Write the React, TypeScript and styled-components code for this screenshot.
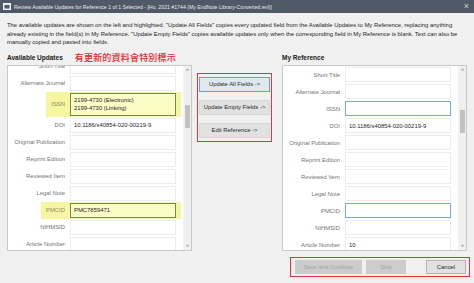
import styled, { createGlobalStyle } from "styled-components";

type Field = {
  label: string;
  value?: string[];
  height?: number;
  highlight?: boolean;
  focus?: boolean;
};

const updates: Field[] = [
  { label: "Short Title" },
  { label: "Alternate Journal" },
  { label: "ISSN", value: ["2199-4730 (Electronic)", "2199-4730 (Linking)"], height: 25, highlight: true },
  { label: "DOI", value: ["10.1186/s40854-020-00219-9"] },
  { label: "Original Publication" },
  { label: "Reprint Edition" },
  { label: "Reviewed Item" },
  { label: "Legal Note" },
  { label: "PMCID", value: ["PMC7859471"], highlight: true },
  { label: "NIHMSID" },
  { label: "Article Number" },
];

const reference: Field[] = [
  { label: "Short Title" },
  { label: "Alternate Journal" },
  { label: "ISSN", focus: true },
  { label: "DOI", value: ["10.1186/s40854-020-00219-9"] },
  { label: "Original Publication" },
  { label: "Reprint Edition" },
  { label: "Reviewed Item" },
  { label: "Legal Note" },
  { label: "PMCID", focus: true },
  { label: "NIHMSID" },
  { label: "Article Number", value: ["10"] },
];

// the left list is scrolled a little, so its first row is half hidden
const FieldPanel = ({ fields, offset, thumbTop }: { fields: Field[]; offset: number; thumbTop: number }) => (
  <Panel>
    <FieldList>
      <FieldScroll $offset={offset}>
        {fields.map((f) => (
          <Row key={f.label} $height={f.height ?? 17}>
            <FieldBox $highlight={!!f.highlight}>
              <Label $highlight={!!f.highlight}>{f.label}</Label>
              <Input $highlight={!!f.highlight} $focus={!!f.focus}>
                {f.value?.map((line) => (
                  <div key={line}>{line}</div>
                ))}
              </Input>
            </FieldBox>
          </Row>
        ))}
      </FieldScroll>
    </FieldList>
    <ScrollBar>
      <Arrow>˄</Arrow>
      <Track>
        <Thumb $top={thumbTop} />
      </Track>
      <Arrow>˅</Arrow>
    </ScrollBar>
  </Panel>
);

const App = () => {
  return (
    <>
      <GlobalStyle />
      <Dialog>
        <TitleBar>
          <WindowIcon width="8" height="7" viewBox="0 0 8 7">
            <rect x="0.5" y="0.5" width="7" height="6" fill="#dfe3e8" stroke="#f4f4f4" />
            <rect x="1.5" y="2" width="5" height="3.5" fill="#4f5967" />
          </WindowIcon>
          <TitleText>
            Review Available Updates for Reference 1 of 1 Selected - [Hu, 2021 #1744 (My EndNote Library-Converted.enl)]
          </TitleText>
          <Close>×</Close>
        </TitleBar>

        <Content>
          <Description>
            The available updates are shown on the left and highlighted. "Update All Fields" copies every updated field from the Available Updates to My Reference, replacing anything
            <br />
            already existing in the field(s) in My Reference. "Update Empty Fields" copies available updates only when the corresponding field in My Reference is blank. Text can also be
            <br />
            manually copied and pasted into fields.
          </Description>

          <Columns>
            <Column>
              <Header>
                <HeaderTitle>Available Updates</HeaderTitle>
                <Note>有更新的資料會特別標示</Note>
              </Header>
              <FieldPanel fields={updates} offset={-8.5} thumbTop={31} />
            </Column>

            <Middle>
              <ActionBox>
                <ActionButton $focused>Update All Fields -&gt;</ActionButton>
                <ActionButton>Update Empty Fields -&gt;</ActionButton>
                <ActionButton>Edit Reference -&gt;</ActionButton>
              </ActionBox>
            </Middle>

            <Column>
              <Header>
                <HeaderTitle>My Reference</HeaderTitle>
              </Header>
              <FieldPanel fields={reference} offset={0} thumbTop={36} />
            </Column>
          </Columns>

          <Footer>
            <FooterBox>
              <FooterButton $disabled $width={67}>Save and Continue</FooterButton>
              <FooterButton $disabled $width={40}>Skip</FooterButton>
              <Spacer />
              <FooterButton $width={40}>Cancel</FooterButton>
            </FooterBox>
          </Footer>
        </Content>
      </Dialog>
    </>
  );
};

const GlobalStyle = createGlobalStyle`
  body {
    margin: 0;
    background: #f0f0f0;
    font-family: "Liberation Sans", Arial, sans-serif;
  }
`;

const Dialog = styled.div`
  width: 474px;
  height: 283px;
  overflow: hidden;
  background: #f0f0f0;
  display: flex;
  flex-direction: column;
`;

const TitleBar = styled.div`
  height: 13px;
  flex-shrink: 0;
  display: flex;
  align-items: center;
  padding: 0 5px 0 3px;
  background: #4f5967;
  color: #e6e8eb;
`;

const WindowIcon = styled.svg`
  flex-shrink: 0;
  margin-right: 3px;
`;

const TitleText = styled.span`
  flex: 1;
  font-size: 5.2px;
  white-space: nowrap;
  overflow: hidden;
`;

const Close = styled.span`
  font-size: 9px;
  color: #d6d9dd;
  line-height: 1;
`;

const Content = styled.div`
  padding: 8px 7px 0 7px;
  display: flex;
  flex-direction: column;
`;

const Description = styled.p`
  margin: 0;
  font-size: 5.9px;
  line-height: 8.7px;
  color: #1e1e1e;
  white-space: nowrap;
`;

const Columns = styled.div`
  display: flex;
  margin-top: 4px;
`;

const Column = styled.div`
  width: 185px;
  display: flex;
  flex-direction: column;
`;

const Header = styled.div`
  height: 12px;
  display: flex;
  align-items: center;
  margin-bottom: 2px;
`;

const HeaderTitle = styled.span`
  font-size: 6.5px;
  font-weight: bold;
  color: #1a1a1a;
`;

const Note = styled.span`
  margin-left: 12px;
  font-size: 9px;
  font-family: "Noto Sans CJK TC", "Noto Sans CJK SC", sans-serif;
  font-weight: 500;
  color: #e5262c;
  letter-spacing: 0.2px;
`;

const Panel = styled.div`
  height: 186px;
  display: flex;
  background: #ffffff;
  border: 1px solid #c9c9c9;
  box-sizing: border-box;
  overflow: hidden;
`;

const FieldList = styled.div`
  flex: 1;
  overflow: hidden;
`;

const FieldScroll = styled.div<{ $offset: number }>`
  margin-top: ${(p) => p.$offset}px;
  display: flex;
  flex-direction: column;
`;

const Row = styled.div<{ $height: number }>`
  height: ${(p) => p.$height}px;
  display: flex;
  justify-content: flex-end;
  padding-right: 2px;
  flex-shrink: 0;
`;

const FieldBox = styled.div<{ $highlight: boolean }>`
  display: flex;
  align-items: center;
  gap: 5px;
  padding: 1px 5px;
  background: ${(p) => (p.$highlight ? "#f5f5a2" : "transparent")};
`;

const Label = styled.span<{ $highlight: boolean }>`
  font-size: 5.9px;
  color: ${(p) => (p.$highlight ? "#8d8c63" : "#747474")};
  white-space: nowrap;
`;

const Input = styled.div<{ $highlight: boolean; $focus: boolean }>`
  width: 106px;
  height: 100%;
  box-sizing: border-box;
  display: flex;
  flex-direction: column;
  justify-content: center;
  padding: 0 3px;
  font-size: 5.9px;
  line-height: 8px;
  color: #1e1e1e;
  background: ${(p) => (p.$highlight ? "#fbfbc6" : "#ffffff")};
  border: 1px solid
    ${(p) => (p.$highlight ? "#6e8d3f" : p.$focus ? "#7fa7cd" : "#ececec")};
`;

const ScrollBar = styled.div`
  width: 7px;
  display: flex;
  flex-direction: column;
  background: #f0f0f0;
  border-left: 1px solid #f4f4f4;
`;

const Arrow = styled.span`
  height: 8px;
  font-size: 6px;
  line-height: 8px;
  text-align: center;
  color: #7a7a7a;
`;

const Track = styled.div`
  flex: 1;
  display: flex;
  flex-direction: column;
`;

const Thumb = styled.div<{ $top: number }>`
  margin-top: ${(p) => p.$top}px;
  height: 23px;
  background: #c1c1c1;
  margin-left: 1px;
  margin-right: 1px;
`;

const Middle = styled.div`
  width: 90px;
  padding: 22px 0 0 5px;
  box-sizing: border-box;
`;

const ActionBox = styled.div`
  width: 75px;
  box-sizing: border-box;
  border: 1.5px solid #e0343c;
  padding: 2.5px 1px 3px 1px;
  display: flex;
  flex-direction: column;
  gap: 8px;
`;

const ActionButton = styled.div<{ $focused?: boolean }>`
  height: 13px;
  display: flex;
  align-items: center;
  justify-content: center;
  font-size: 5.9px;
  color: #2a2a2a;
  background: ${(p) => (p.$focused ? "#dfe7ef" : "#e1e1e1")};
  border: 1px solid ${(p) => (p.$focused ? "#6c9fce" : "#d6d6d6")};
`;

const Footer = styled.div`
  display: flex;
  justify-content: flex-end;
  margin-top: 6px;
  margin-right: -3px;
`;

const FooterBox = styled.div`
  width: 180px;
  height: 20px;
  box-sizing: border-box;
  border: 1.5px solid #e0343c;
  display: flex;
  align-items: center;
  gap: 4px;
  padding: 0 3px 0 4px;
`;

const Spacer = styled.div`
  flex: 1;
`;

const FooterButton = styled.div<{ $disabled?: boolean; $width: number }>`
  width: ${(p) => p.$width}px;
  height: 14px;
  display: flex;
  align-items: center;
  justify-content: center;
  font-size: 5.9px;
  color: ${(p) => (p.$disabled ? "#a3a3a3" : "#2a2a2a")};
  background: ${(p) => (p.$disabled ? "#cccccc" : "#e1e1e1")};
  border: 1px solid ${(p) => (p.$disabled ? "#cccccc" : "#b5b5b5")};
  box-sizing: border-box;
`;

export default App;
